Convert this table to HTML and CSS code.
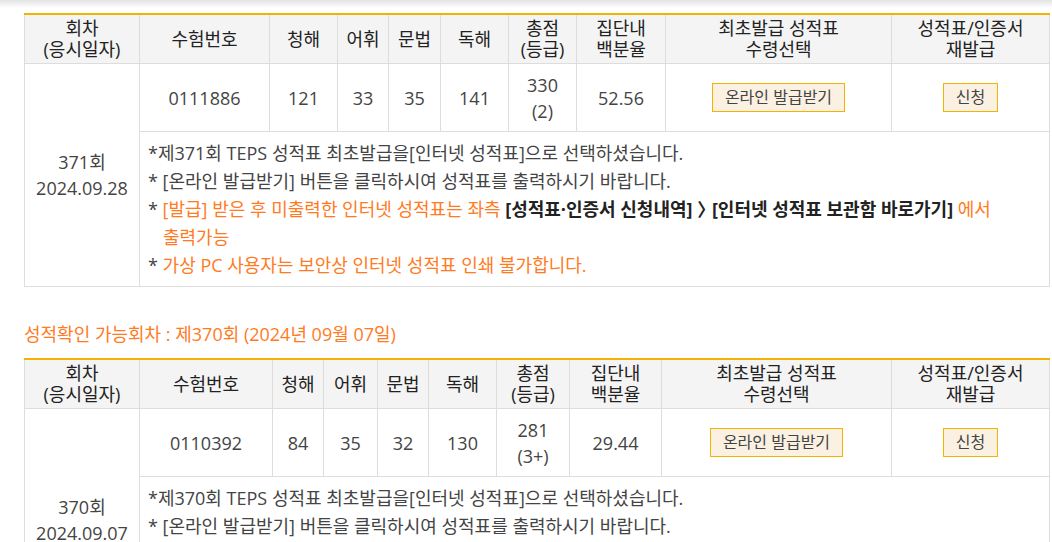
FILE: index.html
```html
<!DOCTYPE html>
<html lang="ko">
<head>
<meta charset="utf-8">
<link rel="stylesheet" href="styles.css">
</head>
<body>
<div class="topshade"></div>
<div class="wrap">
  <table class="score t1">
    <colgroup>
      <col class="w-a"><col class="w-b"><col class="w-c"><col class="w-d"><col class="w-e">
      <col class="w-f"><col class="w-g"><col class="w-h"><col class="w-i"><col class="w-j">
    </colgroup>
    <thead>
      <tr>
        <th>회차<br>(응시일자)</th>
        <th>수험번호</th>
        <th>청해</th>
        <th>어휘</th>
        <th>문법</th>
        <th>독해</th>
        <th>총점<br>(등급)</th>
        <th>집단내<br>백분율</th>
        <th>최초발급 성적표<br>수령선택</th>
        <th>성적표/인증서<br>재발급</th>
      </tr>
    </thead>
    <tbody>
      <tr class="data">
        <td rowspan="2" class="round">371회<br>2024.09.28</td>
        <td>0111886</td>
        <td>121</td>
        <td>33</td>
        <td>35</td>
        <td>141</td>
        <td>330<br>(2)</td>
        <td>52.56</td>
        <td><button class="btn">온라인 발급받기</button></td>
        <td><button class="btn">신청</button></td>
      </tr>
      <tr>
        <td colspan="9" class="msg">
          <p class="first">*제371회 TEPS 성적표 최초발급을[인터넷 성적표]으로 선택하셨습니다.</p>
          <p>* [온라인 발급받기] 버튼을 클릭하시여 성적표를 출력하시기 바랍니다.</p>
          <p class="hang">* <span class="warn">[발급] 받은 후 미출력한 인터넷 성적표는 좌측 </span><strong>[성적표·인증서 신청내역] <span class="chev">〉</span> [인터넷 성적표 보관함 바로가기]</strong> <span class="warn">에서 출력가능</span></p>
          <p class="hang">* <span class="warn">가상 PC 사용자는 보안상 인터넷 성적표 인쇄 불가합니다.</span></p>
        </td>
      </tr>
    </tbody>
  </table>

  <h2 class="section-title">성적확인 가능회차 : 제370회 (2024년 09월 07일)</h2>

  <table class="score t2">
    <colgroup>
      <col class="w-a"><col class="w-b"><col class="w-c"><col class="w-d"><col class="w-e">
      <col class="w-f"><col class="w-g"><col class="w-h"><col class="w-i"><col class="w-j">
    </colgroup>
    <thead>
      <tr>
        <th>회차<br>(응시일자)</th>
        <th>수험번호</th>
        <th>청해</th>
        <th>어휘</th>
        <th>문법</th>
        <th>독해</th>
        <th>총점<br>(등급)</th>
        <th>집단내<br>백분율</th>
        <th>최초발급 성적표<br>수령선택</th>
        <th>성적표/인증서<br>재발급</th>
      </tr>
    </thead>
    <tbody>
      <tr class="data">
        <td rowspan="2" class="round">370회<br>2024.09.07</td>
        <td>0110392</td>
        <td>84</td>
        <td>35</td>
        <td>32</td>
        <td>130</td>
        <td>281<br>(3+)</td>
        <td>29.44</td>
        <td><button class="btn">온라인 발급받기</button></td>
        <td><button class="btn">신청</button></td>
      </tr>
      <tr>
        <td colspan="9" class="msg">
          <p class="first">*제370회 TEPS 성적표 최초발급을[인터넷 성적표]으로 선택하셨습니다.</p>
          <p>* [온라인 발급받기] 버튼을 클릭하시여 성적표를 출력하시기 바랍니다.</p>
          <p class="hang">* <span class="warn">[발급] 받은 후 미출력한 인터넷 성적표는 좌측 </span><strong>[성적표·인증서 신청내역] <span class="chev">〉</span> [인터넷 성적표 보관함 바로가기]</strong> <span class="warn">에서 출력가능</span></p>
          <p class="hang">* <span class="warn">가상 PC 사용자는 보안상 인터넷 성적표 인쇄 불가합니다.</span></p>
        </td>
      </tr>
    </tbody>
  </table>
</div>
</body>
</html>
```

FILE: styles.css
```css
html, body {
  margin: 0;
  padding: 0;
  background: #fff;
}

body {
  font-family: "Open Sans", "Noto Sans CJK KR", sans-serif;
  font-size: 18px;
  color: #444;
  overflow: hidden;
}

.topshade {
  height: 8px;
  background: linear-gradient(#e3e3e3, #ffffff);
}

.wrap {
  padding-left: 24px;
  width: 1025px;
}

.score {
  width: 1025px;
  table-layout: fixed;
  border-collapse: collapse;
  border-top: 2px solid #f2b400;
}

.t1 { margin-top: 5px; }
.t2 { margin-top: 12px; }

.t1 .w-a { width: 115px; }
.t1 .w-b { width: 130px; }
.t1 .w-c { width: 68px; }
.t1 .w-d { width: 51px; }
.t1 .w-e { width: 52px; }
.t1 .w-f { width: 68px; }
.t1 .w-g { width: 68px; }
.t1 .w-h { width: 89px; }
.t1 .w-i { width: 226px; }
.t1 .w-j { width: 158px; }

.t2 .w-a { width: 115px; }
.t2 .w-b { width: 133px; }
.t2 .w-c { width: 51px; }
.t2 .w-d { width: 54px; }
.t2 .w-e { width: 51px; }
.t2 .w-f { width: 68px; }
.t2 .w-g { width: 73px; }
.t2 .w-h { width: 92px; }
.t2 .w-i { width: 230px; }
.t2 .w-j { width: 158px; }

.score th {
  background: #f4f4f4;
  color: #222;
  font-weight: 400;
  line-height: 21px;
  height: 42px;
  padding: 3px 0 3px;
  border: 1px solid #dddddd;
  border-top: none;
  text-align: center;
  vertical-align: middle;
}

.score td {
  border: 1px solid #dddddd;
  text-align: center;
  vertical-align: middle;
  padding: 0;
}

.data td {
  height: 67px;
  line-height: 26px;
}

.round {
  line-height: 28px;
}

.btn {
  font-family: "Open Sans", "Noto Sans CJK KR", sans-serif;
  font-size: 16px;
  color: #444;
  background: #fbf1e3;
  border: 1px solid #f2b400;
  height: 29px;
  line-height: 27px;
  padding: 0 12px;
  margin: 0;
  border-radius: 0;
}

.score td.msg {
  text-align: left;
  padding: 7px 8px 7px;
  line-height: 28px;
  color: #444;
  word-break: keep-all;
}

.msg p {
  margin: 0;
}

.msg .hang {
  padding-left: 15px;
  text-indent: -15px;
}

.warn {
  color: #ff7b1f;
}

.msg strong {
  font-weight: 700;
  color: #222;
}

.chev {
  letter-spacing: -8px;
}

.section-title {
  margin: 35px 0 0;
  font-size: 18px;
  font-weight: 400;
  line-height: 24px;
  color: #ff7b1f;
}
```
